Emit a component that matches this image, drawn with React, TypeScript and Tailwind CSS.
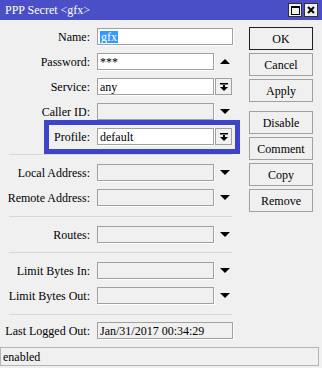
const font = { fontFamily: '"Liberation Serif", "Times New Roman", serif' };

const Tri = ({ up }: { up?: boolean }) => (
  <svg width="10" height="5" viewBox="0 0 10 5">
    <path d={up ? "M0 5 L5 0 L10 5Z" : "M0 0 L10 0 L5 5Z"} fill="#000" />
  </svg>
);

const DropBtn = () => (
  <div className="ml-px flex h-[17px] w-[17px] items-center justify-center border border-[#a0a0a0] bg-[#f0f0f0]">
    <svg width="8" height="8" viewBox="0 0 8 8">
      <rect x="0" y="0" width="8" height="1.5" fill="#000" />
      <rect x="3" y="2" width="2" height="2" fill="#000" />
      <path d="M0 4 L8 4 L4 8Z" fill="#000" />
    </svg>
  </div>
);

type Kind = "full" | "up" | "down" | "btn";

const Row = ({
  label,
  value,
  kind = "down",
  white = false,
  children,
}: {
  label: string;
  value?: string;
  kind?: Kind;
  white?: boolean;
  children?: React.ReactNode;
}) => (
  <div className="flex h-[17px] items-center">
    <div className="w-[90px] text-right leading-none">{label}</div>
    <div
      className={`ml-[7px] flex h-[17px] items-center border border-[#a0a0a0] pl-[2px] leading-none shadow-[1px_1px_0_#fff] ${
        kind === "full" ? "w-[136px]" : "w-[117px]"
      } ${white ? "bg-white" : "bg-[#f0f0f0]"}`}
    >
      {children ?? value}
    </div>
    {kind === "btn" && <DropBtn />}
    {(kind === "up" || kind === "down") && (
      <div className="ml-px flex h-[17px] w-[17px] items-center justify-center pl-[2px]">
        <Tri up={kind === "up"} />
      </div>
    )}
  </div>
);

const Sep = ({ top }: { top: string }) => (
  <div className={`ml-[9px] h-px w-[223px] bg-[#d7d7d7] ${top}`} />
);

const Btn = ({ label, ok, top }: { label: string; ok?: boolean; top?: string }) => (
  <div
    className={`flex h-[23px] w-[64px] items-center justify-center border leading-none ${
      ok ? "border-[#202020]" : "border-[#a0a0a0]"
    } ${top ?? ""}`}
  >
    {label}
  </div>
);

export default function App() {
  return (
    <div className="relative h-[368px] w-[322px] overflow-hidden bg-[#f0f0f0] text-[12px] text-black" style={font}>
      {/* title bar */}
      <div className="flex h-[20px] items-center bg-[#4a4fc8] pl-[5px] pr-[4px] text-white">
        <span className="text-[12px] leading-none">PPP Secret &lt;gfx&gt;</span>
        <div className="ml-auto flex gap-[2px]">
          <div className="flex h-[14px] w-[14px] items-center justify-center border border-[#303030] bg-[#f0f0f0]">
            <div className="h-[9px] w-[9px] border border-t-2 border-black" />
          </div>
          <div className="flex h-[14px] w-[14px] items-center justify-center border border-[#303030] bg-[#f0f0f0]">
            <svg width="8" height="8" viewBox="0 0 8 8">
              <path d="M1 1 L7 7 M7 1 L1 7" stroke="#000" strokeWidth="2" />
            </svg>
          </div>
        </div>
      </div>

      <div className="flex">
        {/* form */}
        <div className="flex w-[240px] flex-none flex-col pt-[8px]">
          <div className="flex flex-col gap-[8px]">
            <Row label="Name:" kind="full" white>
              <span className="bg-[#3399ff] px-px text-white">gfx</span>
            </Row>
            <Row label="Password:" value="***" kind="up" white />
            <Row label="Service:" value="any" kind="btn" white />
            <Row label="Caller ID:" kind="down" />
            <Row label="Profile:" value="default" kind="btn" white />
          </div>
          <Sep top="mt-[9px]" />
          <div className="mt-[9px] flex flex-col gap-[8px]">
            <Row label="Local Address:" />
            <Row label="Remote Address:" />
          </div>
          <Sep top="mt-[10px]" />
          <div className="mt-[9px] flex flex-col gap-[8px]">
            <Row label="Routes:" />
          </div>
          <Sep top="mt-[9px]" />
          <div className="mt-[9px] flex flex-col gap-[8px]">
            <Row label="Limit Bytes In:" />
            <Row label="Limit Bytes Out:" />
          </div>
          <Sep top="mt-[10px]" />
          <div className="mt-[7px]">
            <Row label="Last Logged Out:" value="Jan/31/2017 00:34:29" kind="full" />
          </div>
        </div>

        {/* buttons */}
        <div className="ml-[9px] flex flex-col gap-[3px] pt-[7px]">
          <Btn label="OK" ok />
          <Btn label="Cancel" />
          <Btn label="Apply" />
          <Btn label="Disable" top="mt-[6px]" />
          <Btn label="Comment" />
          <Btn label="Copy" />
          <Btn label="Remove" />
        </div>
      </div>

      {/* status bar */}
      <div className="mt-[8px] flex h-[19px] w-[319px] items-center border border-[#b4b4b4] pl-[2px] leading-none">
        enabled
      </div>

      {/* highlight annotation */}
      <div className="pointer-events-none absolute left-[44px] top-[120px] h-[34px] w-[196px] border-[5px] border-[#3c44c8]" />
    </div>
  );
}
